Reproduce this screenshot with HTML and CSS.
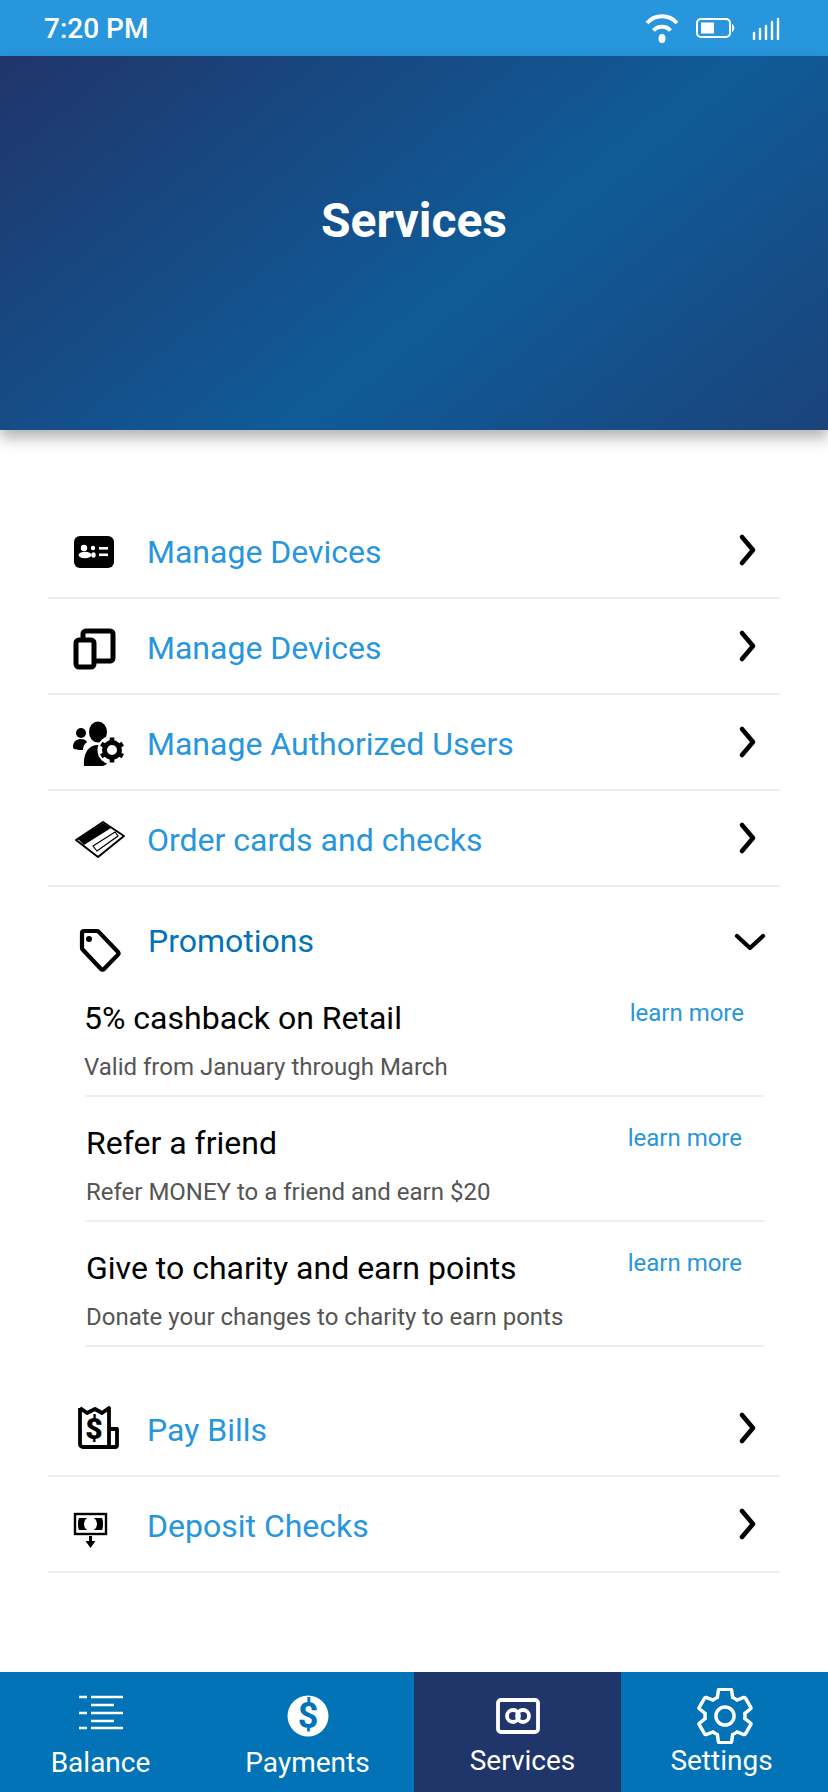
FILE: index.html
```html
<!DOCTYPE html>
<html lang="en">
  <head>
    <meta charset="UTF-8" />
    <meta name="viewport" content="width=device-width, initial-scale=1.0" />
    <title>Services</title>
    <link rel="stylesheet" href="styles.css">
  </head>
  <body>
    <div class="status-bar">
      <span class="status-time">7:20 PM</span>
      <div class="status-icons">
        <svg class="icon-wifi" width="34" height="30" viewBox="0 0 34 30" fill="none" stroke="#fff" stroke-width="4">
          <path d="M2 10C10 1 24 1 32 10" />
          <path d="M8.500 17.500C13 12.500 21 12.500 25.500 17.500" />
          <ellipse cx="17" cy="25.500" rx="3.500" ry="4.500" fill="#fff" stroke="none" />
        </svg>
        <svg class="icon-battery" width="40" height="20" viewBox="0 0 40 20" fill="none">
          <rect x="1" y="1" width="33" height="18" rx="4" stroke="#fff" stroke-width="2" />
          <rect x="5" y="4.500" width="13" height="11" fill="#fff" />
          <path d="M36.500 6.500q3 3.500 0 7z" fill="#fff" stroke="#fff" />
        </svg>
        <svg width="28" height="23" viewBox="0 0 28 23" fill="none" stroke="#fff" stroke-width="2.400" stroke-linecap="round">
          <path d="M2 22v-6M8 22v-10M14 22v-13M20 22v-17M26 22v-20" />
        </svg>
      </div>
    </div>

    <header class="page-header">
      <h1>Services</h1>
    </header>

    <main class="service-list">
      <a class="row">
        <svg class="row-icon" viewBox="0 0 60 60">
          <rect x="6" y="16" width="40" height="32" rx="6" fill="#000" />
          <g fill="#fff">
            <circle cx="16" cy="28" r="3.200" />
            <circle cx="25" cy="28" r="2.200" />
            <ellipse cx="17" cy="35" rx="6.500" ry="3.200" />
            <ellipse cx="25.500" cy="35" rx="2.200" ry="2.800" />
            <rect x="31" y="27" width="9" height="2.600" />
            <rect x="31" y="33.500" width="9" height="2.600" />
          </g>
        </svg>
        <span class="row-label">Manage Devices</span>
        <svg class="chevron" viewBox="0 0 20 34" fill="none" stroke="#000" stroke-width="4.600" stroke-linecap="round" stroke-linejoin="round">
          <path d="M4 4l11 13-11 13" />
        </svg>
      </a>
      <a class="row">
        <svg class="row-icon" viewBox="0 0 60 60">
          <rect x="15" y="15" width="30" height="30" rx="3" fill="none" stroke="#000" stroke-width="5" />
          <rect x="43" y="15" width="4" height="30" fill="#000" />
          <rect x="8" y="24" width="18" height="27" rx="3" fill="#fff" stroke="#000" stroke-width="5" />
        </svg>
        <span class="row-label">Manage Devices</span>
        <svg class="chevron" viewBox="0 0 20 34" fill="none" stroke="#000" stroke-width="4.600" stroke-linecap="round" stroke-linejoin="round">
          <path d="M4 4l11 13-11 13" />
        </svg>
      </a>
      <a class="row">
        <svg class="row-icon" viewBox="0 0 60 60">
          <ellipse cx="30" cy="20" rx="9" ry="10.500" fill="#000" />
          <circle cx="13" cy="21" r="5" fill="#000" />
          <path d="M5 35c0-6 4-8 8-8 3 0 5 1 6 3-3 2-4 5-4 8-5 0-10 0-10-3z" fill="#000" />
          <path d="M16 54c-1-12 4-21 14-21 8 0 12 4 12 10s-4 11-8 11z" fill="#000" />
          <circle cx="44" cy="38" r="14.500" fill="#fff" />
          <circle cx="44" cy="38" r="7.500" fill="none" stroke="#000" stroke-width="5" />
          <path d="M44 25.500v5M44 45.500v5M33.200 31.800l4.300 2.500M50.500 41.700l4.300 2.500M33.200 44.200l4.300-2.500M50.500 34.300l4.300-2.500" fill="none" stroke="#000" stroke-width="4.600" />
        </svg>
        <span class="row-label">Manage Authorized Users</span>
        <svg class="chevron" viewBox="0 0 20 34" fill="none" stroke="#000" stroke-width="4.600" stroke-linecap="round" stroke-linejoin="round">
          <path d="M4 4l11 13-11 13" />
        </svg>
      </a>
      <a class="row">
        <svg class="row-icon" viewBox="0 0 60 60">
          <path d="M8 32L35 14 56 28 30 49z" fill="#fff" stroke="#000" stroke-width="2" stroke-linejoin="round" />
          <path d="M10 31L35 15 43 20 16 37z" fill="#000" />
          <path d="M25 38L47 24 50 28 29 43z" fill="none" stroke="#000" stroke-width="1.200" />
        </svg>
        <span class="row-label">Order cards and checks</span>
        <svg class="chevron" viewBox="0 0 20 34" fill="none" stroke="#000" stroke-width="4.600" stroke-linecap="round" stroke-linejoin="round">
          <path d="M4 4l11 13-11 13" />
        </svg>
      </a>

      <section class="promotions">
        <div class="promo-head">
          <svg class="row-icon" viewBox="0 0 60 60">
            <path d="M16 20h13a2 2 0 0 1 1.500 .600L50 41a2 2 0 0 1 0 2.600L36 58a2 2 0 0 1-3 0L14.600 38.500a2 2 0 0 1-.600-1.500V22a2 2 0 0 1 2-2z" fill="none" stroke="#000" stroke-width="4.200" stroke-linejoin="round" />
            <circle cx="21" cy="28" r="3" fill="#000" />
          </svg>
          <span class="promo-title">Promotions</span>
          <svg class="chevron-down" viewBox="0 0 32 18" fill="none" stroke="#000" stroke-width="4.200" stroke-linecap="round" stroke-linejoin="round">
            <path d="M3 3l13 12 13-12" />
          </svg>
        </div>
        <div class="promo-list">
          <div class="promo-item">
            <div>
              <div class="promo-name">5% cashback on Retail</div>
              <div class="promo-sub">Valid from January through March</div>
            </div>
            <a class="learn-more">learn more</a>
          </div>
          <div class="promo-item">
            <div>
              <div class="promo-name">Refer a friend</div>
              <div class="promo-sub">Refer MONEY to a friend and earn $20</div>
            </div>
            <a class="learn-more">learn more</a>
          </div>
          <div class="promo-item">
            <div>
              <div class="promo-name">Give to charity and earn points</div>
              <div class="promo-sub">Donate your changes to charity to earn ponts</div>
            </div>
            <a class="learn-more">learn more</a>
          </div>
        </div>
      </section>

      <a class="row">
        <svg class="row-icon" viewBox="0 0 60 60">
          <path d="M12 10l7 5 8-4 7 4 7-5V47M12 10V46a3 3 0 0 0 3 3H47a2 2 0 0 0 2-2V31H41" fill="none" stroke="#000" stroke-width="3.800" stroke-linejoin="round" />
          <text class="bill-dollar" x="26" y="41" text-anchor="middle">$</text>
        </svg>
        <span class="row-label">Pay Bills</span>
        <svg class="chevron" viewBox="0 0 20 34" fill="none" stroke="#000" stroke-width="4.600" stroke-linecap="round" stroke-linejoin="round">
          <path d="M4 4l11 13-11 13" />
        </svg>
      </a>
      <a class="row">
        <svg class="row-icon" viewBox="0 0 60 60">
          <rect x="7" y="20" width="31" height="20" fill="#fff" stroke="#000" stroke-width="2.400" />
          <path d="M11 24h23q1 2 1 6t-1 6H11q-1-2-1-6t1-6z" fill="#000" />
          <ellipse cx="22.500" cy="30" rx="6.500" ry="7" fill="#fff" />
          <path d="M21 42h3v5h3.500l-5 7-5-7H21z" fill="#000" />
        </svg>
        <span class="row-label">Deposit Checks</span>
        <svg class="chevron" viewBox="0 0 20 34" fill="none" stroke="#000" stroke-width="4.600" stroke-linecap="round" stroke-linejoin="round">
          <path d="M4 4l11 13-11 13" />
        </svg>
      </a>
    </main>

    <nav class="bottom-nav">
      <a class="nav-item nav-balance">
        <svg class="nav-icon" viewBox="0 0 56 56" fill="none" stroke="#fff" stroke-width="2.400">
          <path d="M6 9h8M18 9h32M18 17h23M6 25h8M18 25h32M18 33h23M6 40h8M18 40h32" />
        </svg>
        <span class="nav-label">Balance</span>
      </a>
      <a class="nav-item nav-payments">
        <svg class="nav-icon" viewBox="0 0 56 56">
          <circle cx="28" cy="28" r="20.500" fill="#fff" />
          <text class="pay-dollar" x="28" y="40" text-anchor="middle">$</text>
        </svg>
        <span class="nav-label">Payments</span>
      </a>
      <a class="nav-item nav-services active">
        <svg class="nav-icon" viewBox="0 0 56 56" fill="none" stroke="#fff" stroke-width="3.800">
          <rect x="8" y="12" width="40" height="32" rx="3" />
          <circle cx="23" cy="28" r="6" />
          <circle cx="33" cy="28" r="6" />
        </svg>
        <span class="nav-label">Services</span>
      </a>
      <a class="nav-item nav-settings">
        <svg class="nav-icon" viewBox="1.500 1.500 21 21" fill="none" stroke="#fff" stroke-width="1.300">
          <path d="M19.430 12.980c.04-.32.07-.64.07-.98 0-.34-.03-.66-.07-.98l2.110-1.650c.19-.15.24-.42.12-.64l-2-3.460c-.09-.16-.26-.25-.44-.25-.06 0-.12.01-.17.03l-2.490 1c-.52-.4-1.080-.73-1.690-.98l-.38-2.650C14.460 2.180 14.250 2 14 2h-4c-.25 0-.46.18-.49.42l-.38 2.650c-.61.25-1.170.59-1.690.98l-2.490-1c-.06-.02-.12-.03-.18-.03-.17 0-.34.09-.43.25l-2 3.460c-.13.22-.07.49.12.64l2.110 1.650c-.04.32-.07.65-.07.98 0 .33.03.66.07.98l-2.110 1.650c-.19.15-.24.42-.12.64l2 3.460c.09.16.26.25.44.25.06 0 .12-.01.17-.03l2.490-1c.52.4 1.080.73 1.690.98l.38 2.650c.03.24.24.42.49.42h4c.25 0 .46-.18.49-.42l.38-2.650c.61-.25 1.170-.59 1.690-.98l2.490 1c.06.02.12.03.18.03.17 0 .34-.09.43-.25l2-3.460c.12-.22.07-.49-.12-.64l-2.110-1.650z" />
          <circle cx="12" cy="12" r="3.400" />
        </svg>
        <span class="nav-label">Settings</span>
      </a>
    </nav>
  </body>
</html>
```

FILE: styles.css
```css
* {
  box-sizing: border-box;
}
body {
  margin: 0;
  height: 1792px;
  display: flex;
  flex-direction: column;
  overflow: hidden;
  background-color: #fff;
  font-family: Roboto, "Liberation Sans", sans-serif;
}

/* status bar */
.status-bar {
  height: 56px;
  padding: 0 48px 0 44px;
  display: flex;
  align-items: center;
  justify-content: space-between;
  background-color: #2896dc;
  color: #fff;
}
.status-time {
  font-size: 28px;
  font-weight: 500;
}
.status-icons {
  display: flex;
  align-items: center;
  gap: 17px;
}
.icon-battery {
  margin-right: -1px;
}

/* header */
.page-header {
  position: relative;
  height: 374px;
  display: flex;
  align-items: center;
  justify-content: center;
  padding-bottom: 46px;
  background: linear-gradient(141deg, #20356a 0%, #0f5b98 58%, #1b437a 100%);
  box-shadow: 0 8px 14px rgba(0, 0, 0, 0.3);
}
.page-header h1 {
  margin: 0;
  font-size: 48px;
  font-weight: 700;
  color: #fff;
}

/* list */
.service-list {
  margin: 73px 48px 0;
}
.row {
  height: 96px;
  padding-left: 20px;
  display: flex;
  align-items: center;
  border-bottom: 2px solid #eee;
}
.row-icon {
  width: 60px;
  height: 60px;
  margin-right: 19px;
  flex: none;
  overflow: visible;
}
.row-label {
  flex: 1;
  padding-top: 4px;
  font-size: 32px;
  color: #2896dc;
}
.chevron {
  width: 20px;
  height: 34px;
  margin-right: 22px;
}

/* promotions */
.promotions {
  margin-bottom: 34px;
}
.promo-head {
  height: 60px;
  margin-top: 24px;
  padding-left: 20px;
  display: flex;
  align-items: center;
}
.promo-title {
  flex: 1;
  padding-left: 1px;
  font-size: 32px;
  color: #0272b8;
}
.chevron-down {
  width: 32px;
  height: 18px;
  margin: 2px 14px 0 0;
}
.promo-list {
  margin: 1px 16px 0 37px;
}
.promo-item {
  height: 125px;
  padding: 28px 20px 0 0;
  display: flex;
  justify-content: space-between;
  align-items: flex-start;
  border-bottom: 2px solid #eee;
}
.promo-item + .promo-item {
  padding: 28px 22px 0 2px;
}
.promo-name {
  font-size: 32px;
  line-height: 36px;
  color: #000;
  margin-left: -1px;
}
.promo-sub {
  margin-top: 15px;
  margin-left: -1px;
  font-size: 24px;
  line-height: 32px;
  color: #555;
}
.learn-more {
  margin-top: -1px;
  font-size: 24px;
  line-height: 28px;
  color: #2896dc;
}
.bill-dollar {
  font-size: 30px;
  font-weight: 900;
  fill: #000;
}

/* bottom nav */
.bottom-nav {
  margin-top: auto;
  height: 120px;
  display: grid;
  grid-template-columns: repeat(4, 1fr);
  background-color: #0273b7;
  color: #fff;
}
.nav-item {
  padding-top: 16px;
  display: flex;
  flex-direction: column;
  align-items: center;
}
.nav-item.active {
  background-color: #20356a;
}
.nav-balance,
.nav-payments {
  padding-right: 6px;
}
.nav-balance .nav-label,
.nav-payments .nav-label {
  margin-top: 2px;
}
.nav-services .nav-label {
  margin-left: 10px;
}
.nav-settings .nav-label {
  margin-right: 6px;
}
.nav-icon {
  width: 56px;
  height: 56px;
}
.nav-label {
  font-size: 28px;
  line-height: 34px;
}
.pay-dollar {
  font-size: 36px;
  font-weight: 700;
  fill: #0273b7;
}
```
